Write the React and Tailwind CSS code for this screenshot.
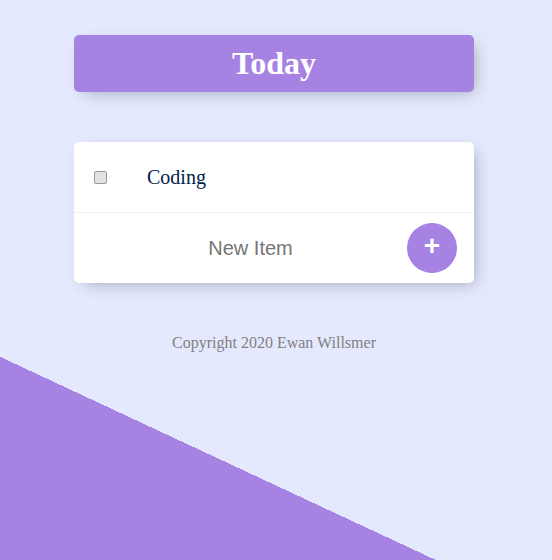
import React, { useState } from 'react';

function App() {
  const [items] = useState(['Coding']);
  const [newItem, setNewItem] = useState('');

  return (
    <div className="h-[971px] w-full bg-[#E4E9FD] bg-[linear-gradient(25deg,#A683E3_50%,#E4E9FD_50%)] pt-[35px]">
      <div className="w-[548px] flex flex-col items-center">
        {/* Heading */}
        <div className="w-[400px] rounded-[5px] bg-[#A683E3] shadow-[5px_5px_15px_-5px_rgba(0,0,0,0.3)] text-center">
          <h1 className="p-[10px] text-[32px] leading-[37px] font-bold text-white font-['Liberation_Serif',serif]">
            Today
          </h1>
        </div>

        {/* List */}
        <div className="mt-[50px] w-[400px] rounded-[5px] bg-white shadow-[5px_5px_15px_-5px_rgba(0,0,0,0.3)]">
          {items.map(item => (
            <div key={item} className="h-[71px] flex items-center border-b border-[#F1F1F1]">
              <input
                type="checkbox"
                className="appearance-none ml-[20px] mr-[20px] w-[13px] h-[13px] rounded-[2px] border border-[#9a9a9a] bg-[#e3e3e3]"
              />
              <p className="ml-[20px] text-[20px] text-[#00204a] font-['Liberation_Serif',serif]">{item}</p>
            </div>
          ))}
          <form className="h-[70px] flex items-center pl-[20px]" onSubmit={e => e.preventDefault()}>
            <input
              type="text"
              value={newItem}
              onChange={e => setNewItem(e.target.value)}
              placeholder="New Item"
              className="w-[313px] h-[60px] text-center text-[20px] outline-none placeholder:text-[#757575] font-['Liberation_Sans',sans-serif]"
            />
            <button
              type="submit"
              className="w-[50px] h-[50px] rounded-full bg-[#A683E3] text-white text-[28px] font-bold leading-none pb-[4px] font-['Liberation_Sans',sans-serif]"
            >
              +
            </button>
          </form>
        </div>

        <footer className="mt-[48px] text-[16px] text-[gray] font-['Liberation_Serif',serif]">
          Copyright 2020 Ewan Willsmer
        </footer>
      </div>
    </div>
  );
}

export default App;
